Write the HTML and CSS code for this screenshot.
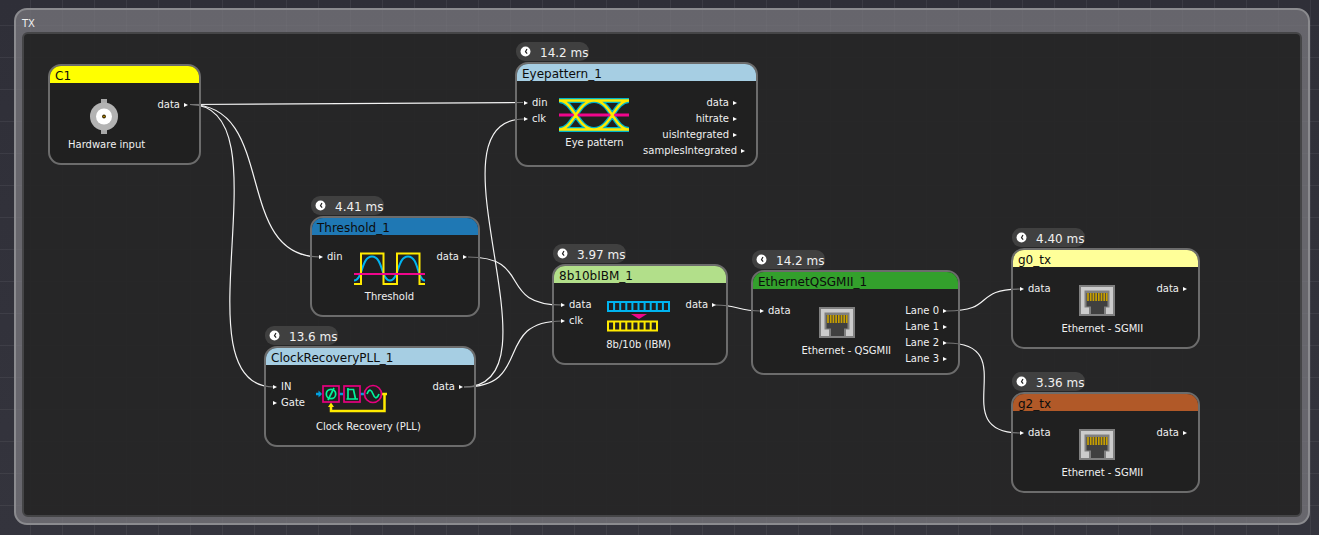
FILE: index.html
```html
<!DOCTYPE html>
<html lang="en">
<head>
<meta charset="utf-8">
<title>TX filter graph</title>
<link rel="stylesheet" href="styles.css">
</head>
<body>
<svg class="defs" width="0" height="0" aria-hidden="true">
  <symbol id="clock" viewBox="0 0 12 12">
    <circle cx="6" cy="6" r="5.4" fill="#fff"/>
    <path d="M7.6 3.2 6 6.2l1.8 2.2" fill="none" stroke="#222" stroke-width="1.3"/>
  </symbol>
  <symbol id="rj45" viewBox="0 0 72 38">
    <rect x="17" y="2" width="36" height="31" fill="#808080"/>
    <rect x="19" y="4" width="32" height="27" fill="#ccc"/>
    <path d="M22.500 7.500h25v17H44V31H27v-6.500h-4.500z" fill="#808080"/>
    <path d="M24.500 10h21v13.500H42V31H29v-7.500h-4.500z" fill="#404040"/>
    <path d="M26 10v8M28.700 10v8M31.400 10v8M34.100 10v8M36.800 10v8M39.500 10v8M42.200 10v8M44.700 10v8" stroke="#c8a000" stroke-width="1.7"/>
  </symbol>
</svg>
<main class="canvas">
  <section class="group">
    <h1 class="group-title">TX</h1>
    <div class="group-body"></div>
  </section>

  <svg class="wires" aria-hidden="true">
    <path d="M190 104.500 523 102.500"/>
    <path d="M190 104.500C278 104.500 232 257 320 257"/>
    <path d="M190 104.500C290 104.500 174 387 274 387"/>
    <path d="M464 387C567 387 421 119 524 119"/>
    <path d="M468 257C534 257 496 305 562 305"/>
    <path d="M464 387C534 387 492 321 562 321"/>
    <path d="M715 305C740 305 736 311 761 311"/>
    <path d="M947 311C996 311 972 289 1021 289"/>
    <path d="M947 343C1025 343 943 433 1021 433"/>
  </svg>

  <article class="node c1">
    <div class="card">
      <h2 class="title">C1</h2>
      <div class="body">
        <figure class="kind">
          <svg class="icon" viewBox="0 0 72 38"><path d="M33 0h6v35h-6z" fill="#a8a8a8"/><circle cx="36" cy="17.500" r="14" fill="#b3b3b3"/><circle cx="36" cy="17.500" r="8" fill="#fff"/><circle cx="36" cy="17.500" r="1.900" fill="#3a2a00"/><circle cx="36" cy="17.500" r=".8" fill="#d4a000"/></svg>
          <figcaption>Hardware input</figcaption>
        </figure>
        <ul class="outs"><li>data</li></ul>
      </div>
    </div>
  </article>

  <article class="node eye">
    <p class="time"><svg class="clock"><use href="#clock"/></svg>14.2 ms</p>
    <div class="card">
      <h2 class="title">Eyepattern_1</h2>
      <div class="body">
        <ul class="ins"><li>din</li><li>clk</li></ul>
        <figure class="kind">
          <svg class="icon" viewBox="0 0 72 38">
            <g fill="none">
              <path d="M1 3.500H71M1 32.500H71M1 3.500C16 3.500 19 32.500 36 32.500S56 3.500 71 3.500M1 32.500C16 32.500 19 3.500 36 3.500S56 32.500 71 32.500" stroke="#00b4c8" stroke-width="5"/>
              <path d="M1 18h70" stroke="#f0068c" stroke-width="3"/>
              <path d="M1 3.500H71M1 32.500H71M1 3.500C16 3.500 19 32.500 36 32.500S56 3.500 71 3.500M1 32.500C16 32.500 19 3.500 36 3.500S56 32.500 71 32.500" stroke="#ffea00" stroke-width="2.500"/>
            </g>
          </svg>
          <figcaption>Eye pattern</figcaption>
        </figure>
        <ul class="outs"><li class="short">data</li><li class="short">hitrate</li><li class="short">uisIntegrated</li><li>samplesIntegrated</li></ul>
      </div>
    </div>
  </article>

  <article class="node threshold">
    <p class="time"><svg class="clock"><use href="#clock"/></svg>4.41 ms</p>
    <div class="card">
      <h2 class="title">Threshold_1</h2>
      <div class="body">
        <ul class="ins"><li>din</li></ul>
        <figure class="kind">
          <svg class="icon" viewBox="0 0 72 38">
            <g fill="none" stroke-width="2">
              <path d="M1 29.500C10 29.500 8 5.500 19 5.500S28 29.500 37 29.500 44 5.500 55 5.500 64 29.500 72 29.500" stroke="#00b4f0"/>
              <path d="M1 33h7V2.500h22.500V33h13.500V2.500h22.500V33H72" stroke="#ffea00"/>
              <path d="M1 23h71" stroke="#f0068c"/>
            </g>
          </svg>
          <figcaption>Threshold</figcaption>
        </figure>
        <ul class="outs"><li>data</li></ul>
      </div>
    </div>
  </article>

  <article class="node pll">
    <p class="time"><svg class="clock"><use href="#clock"/></svg>13.6 ms</p>
    <div class="card">
      <h2 class="title">ClockRecoveryPLL_1</h2>
      <div class="body">
        <ul class="ins"><li>IN</li><li>Gate</li></ul>
        <figure class="kind">
          <svg class="icon" viewBox="1 0 72 38">
            <g fill="none">
              <path d="M1 13h5M24 13h4M45 13h4" stroke="#00a0e0" stroke-width="2.500"/>
              <path d="M3.500 9.500 7 13l-3.500 3.500z" fill="#00a0e0"/>
              <path d="M67 13h5M69.500 12v18H16v-5" stroke="#ffea00" stroke-width="2.500"/>
              <path d="M13 26l3-4.500 3 4.500z" fill="#ffea00"/>
              <g stroke="#e6007e" stroke-width="1.700">
                <rect x="8" y="5" width="16" height="16"/>
                <rect x="29" y="5" width="16" height="16"/>
                <circle cx="58" cy="13" r="8.500"/>
              </g>
              <g stroke="#00f59b" stroke-width="1.700">
                <circle cx="16" cy="13" r="4.700"/>
                <path d="M13 19l6-12M33 7v11.500M32 8.500h6.500l2 9.500M31.500 18H43M52 13c2.500-6 4.500-4 6 0s3.500 6 6 0"/>
              </g>
            </g>
          </svg>
          <figcaption>Clock Recovery (PLL)</figcaption>
        </figure>
        <ul class="outs"><li>data</li></ul>
      </div>
    </div>
  </article>

  <article class="node ibm">
    <p class="time"><svg class="clock"><use href="#clock"/></svg>3.97 ms</p>
    <div class="card">
      <h2 class="title">8b10bIBM_1</h2>
      <div class="body">
        <ul class="ins"><li>data</li><li>clk</li></ul>
        <figure class="kind">
          <svg class="icon" viewBox="0 0 72 38">
            <g fill="none" stroke-width="2">
              <path d="M5 3h61v9H5zM11.100 3v9M17.200 3v9M23.300 3v9M29.400 3v9M35.500 3v9M41.600 3v9M47.700 3v9M53.800 3v9M59.900 3v9" stroke="#00b4f0"/>
              <path d="M5 22.500h49v9H5zM11.100 22.500v9M17.200 22.500v9M23.300 22.500v9M29.400 22.500v9M35.500 22.500v9M41.600 22.500v9M47.700 22.500v9" stroke="#ffea00"/>
            </g>
            <path d="M28 15h16l-8 5z" fill="#f0068c"/>
          </svg>
          <figcaption>8b/10b (IBM)</figcaption>
        </figure>
        <ul class="outs"><li>data</li></ul>
      </div>
    </div>
  </article>

  <article class="node qsgmii">
    <p class="time"><svg class="clock"><use href="#clock"/></svg>14.2 ms</p>
    <div class="card">
      <h2 class="title">EthernetQSGMII_1</h2>
      <div class="body">
        <ul class="ins"><li>data</li></ul>
        <figure class="kind">
          <svg class="icon"><use href="#rj45"/></svg>
          <figcaption>Ethernet - QSGMII</figcaption>
        </figure>
        <ul class="outs"><li>Lane 0</li><li>Lane 1</li><li>Lane 2</li><li>Lane 3</li></ul>
      </div>
    </div>
  </article>

  <article class="node g0">
    <p class="time"><svg class="clock"><use href="#clock"/></svg>4.40 ms</p>
    <div class="card">
      <h2 class="title">g0_tx</h2>
      <div class="body">
        <ul class="ins"><li>data</li></ul>
        <figure class="kind">
          <svg class="icon"><use href="#rj45"/></svg>
          <figcaption>Ethernet - SGMII</figcaption>
        </figure>
        <ul class="outs"><li>data</li></ul>
      </div>
    </div>
  </article>

  <article class="node g2">
    <p class="time"><svg class="clock"><use href="#clock"/></svg>3.36 ms</p>
    <div class="card">
      <h2 class="title">g2_tx</h2>
      <div class="body">
        <ul class="ins"><li>data</li></ul>
        <figure class="kind">
          <svg class="icon"><use href="#rj45"/></svg>
          <figcaption>Ethernet - SGMII</figcaption>
        </figure>
        <ul class="outs"><li>data</li></ul>
      </div>
    </div>
  </article>
</main>
</body>
</html>
```
FILE: styles.css
```css
* {
  box-sizing: border-box;
  margin: 0;
  padding: 0;
}

body {
  background: linear-gradient(#2f2f38, #34343d);
  color: #f0f0f0;
  font-family: "DejaVu Sans", sans-serif;
  font-size: 10px;
  line-height: 16px;
}

.defs {
  position: absolute;
}

.canvas {
  position: relative;
  display: flex;
  min-height: 100vh;
  padding: 8px 9px 10px 14px;
}

/* faint 32px grid, visible through the group frame */
.canvas::before {
  content: "";
  position: absolute;
  inset: 0;
  background:
    linear-gradient(90deg, rgba(255, 255, 255, .06) 1px, transparent 1px) 30px 0 / 32px 32px,
    linear-gradient(rgba(255, 255, 255, .06) 1px, transparent 1px) 0 25px / 32px 32px;
}

.group {
  position: relative;
  flex: 1;
  display: flex;
  flex-direction: column;
  padding: 6px 6px 6px 6px;
  border: 2px solid #8b8b8f;
  border-radius: 13px;
  background: rgba(121, 120, 126, .75);
}

.group-title {
  font-size: 10px;
  font-weight: normal;
  line-height: 16px;
  color: #f0f0f0;
}

.group-body {
  flex: 1;
  border: 2px solid #454547;
  border-radius: 6px;
  background: rgba(28, 28, 28, .86);
}

.wires {
  position: absolute;
  inset: 0;
  width: 100%;
  height: 100%;
  fill: none;
  stroke: #f4f4f4;
  stroke-width: 1.2;
}

.node {
  position: absolute;
}

.time {
  display: flex;
  align-items: center;
  gap: 9px;
  width: 73px;
  height: 19px;
  margin: 0 0 1px 1px;
  padding: 2px 0 0 4px;
  border-radius: 9px;
  background: #404040;
  font-size: 12px;
  white-space: nowrap;
}

.clock {
  flex: none;
  width: 11px;
  height: 11px;
  margin-bottom: 3px;
}

.card {
  border: 2px solid #6c6c6c;
  border-radius: 13px;
  background: rgba(28, 28, 28, .58);
}

.title {
  height: 17px;
  padding-left: 5px;
  border-radius: 11px 11px 0 0;
  background: var(--tint);
  color: #0c0c0c;
  font-size: 12px;
  font-weight: normal;
  line-height: 20px;
}

.body {
  display: flex;
  gap: 11px;
  padding: 0 11px 0 7px;
}

.ins,
.outs {
  padding: 14px 0 6px;
  list-style: none;
  white-space: nowrap;
}

.outs {
  margin-left: auto;
}

.ins li,
.outs li {
  display: flex;
  align-items: center;
  gap: 4px;
}

.outs li {
  justify-content: flex-end;
}

.outs .short {
  margin-right: 8px;
}

.ins li::before,
.outs li::after {
  content: "";
  border: solid transparent;
  border-width: 2px 0 2px 4px;
  border-left-color: #fff;
}

.kind {
  flex: none;
  width: 72px;
  padding: 16px 0 10px;
}

.icon {
  display: block;
  width: 72px;
  height: 38px;
}

.kind figcaption {
  width: max-content;
  min-width: 72px;
  text-align: center;
}

.c1 { left: 48px; top: 64px; width: 153px; --tint: #ffff00; }
.c1 .body { padding-left: 18px; }
.eye { left: 515px; top: 42px; width: 243px; --tint: #a6cee3; }
.threshold { left: 310px; top: 196px; width: 170px; --tint: #1f78b4; }
.pll { left: 264px; top: 326px; width: 212px; --tint: #a6cee3; }
.ibm { left: 552px; top: 244px; width: 176px; --tint: #b2df8a; }
.qsgmii { left: 751px; top: 250px; width: 209px; --tint: #33a02c; }
.g0 { left: 1011px; top: 228px; width: 189px; --tint: #ffff99; }
.g2 { left: 1011px; top: 372px; width: 189px; --tint: #b15928; }
```
